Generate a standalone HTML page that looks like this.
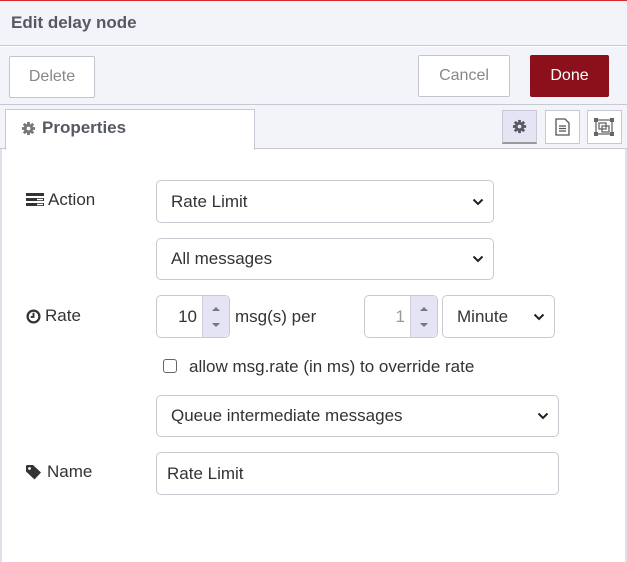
<!DOCTYPE html>
<html><head><style>
*{box-sizing:border-box;margin:0;padding:0}
body{width:627px;height:562px;overflow:hidden;background:#fff;font-family:"Liberation Sans",Arial,sans-serif;position:relative;color:#333}
.a{position:absolute}
.btn{position:absolute;border:1px solid #c4c4cc;background:#fff;color:#888;font-size:16px;display:flex;align-items:center;justify-content:center;border-radius:2px}
.inp{position:absolute;border:1px solid #c8c8d0;border-radius:5px;background:#fff;font-size:17px;color:#333;display:flex;align-items:center;padding-left:14px}
.chev{position:absolute;right:9px;top:50%;margin-top:-4px}
.lbl{position:absolute;font-size:17px;color:#333;display:flex;align-items:center;gap:4px}
.spin{position:absolute;right:0;top:0;bottom:0;width:27px;background:#e4e4f4;border-left:1px solid #d0d0e0;border-radius:0 5px 5px 0}
</style></head><body>
<div class="a" style="left:0;top:0;width:627px;height:1px;background:#d42a2a"></div>
<div class="a" style="left:0;top:1px;width:627px;height:45px;background:#f3f3fa;border-bottom:1px solid #c8c8d4"></div>
<div class="a" style="left:11px;top:13px;font-size:17px;font-weight:bold;color:#555a62">Edit delay node</div>
<div class="a" style="left:0;top:47px;width:627px;height:58px;background:#f3f3fa;border-bottom:1px solid #c8c8d4"></div>
<div class="btn" style="left:9px;top:56px;width:86px;height:42px">Delete</div>
<div class="btn" style="left:418px;top:55px;width:92px;height:42px">Cancel</div>
<div class="btn" style="left:530px;top:55px;width:79px;height:42px;background:#8c101c;border-color:#8c101c;color:#fff">Done</div>
<div class="a" style="left:0;top:105px;width:627px;height:44px;background:#f3f3fa;border-bottom:1px solid #c8c8d4"></div>
<div class="a" style="left:5px;top:109px;width:250px;height:41px;background:#fff;border:1px solid #c8c8d4;border-bottom:none"></div>
<div class="a" style="left:21px;top:118px;font-size:17px;font-weight:bold;color:#555a62;display:flex;align-items:center;gap:6px"><svg width="15" height="15" viewBox="0 0 16 16"><circle cx="8" cy="8" r="5" fill="#777"/><g stroke="#777" stroke-width="3"><line x1="8" y1="1" x2="8" y2="15"/><line x1="1" y1="8" x2="15" y2="8"/><line x1="3" y1="3" x2="13" y2="13"/><line x1="13" y1="3" x2="3" y2="13"/></g><circle cx="8" cy="8" r="2" fill="#fff"/></svg>Properties</div>
<div class="a" style="left:502px;top:110px;width:35px;height:34px;background:#e4e4f4;border:1px solid #c8c8d4;border-bottom:2px solid #999"></div>
<svg class="a" style="left:512px;top:119px" width="15" height="15" viewBox="0 0 16 16"><circle cx="8" cy="8" r="5" fill="#555a62"/><g stroke="#555a62" stroke-width="3"><line x1="8" y1="1" x2="8" y2="15"/><line x1="1" y1="8" x2="15" y2="8"/><line x1="3" y1="3" x2="13" y2="13"/><line x1="13" y1="3" x2="3" y2="13"/></g><circle cx="8" cy="8" r="2" fill="#e4e4f4"/></svg>
<div class="a" style="left:545px;top:110px;width:35px;height:34px;background:#fff;border:1px solid #c8c8d4"></div>
<svg class="a" style="left:555px;top:118px" width="15" height="18" viewBox="0 0 15 18"><path d="M1 1h9l4 4v12H1z" fill="#fff" stroke="#555" stroke-width="1.3"/><path d="M4 8h7M4 10.5h7M4 13h7" stroke="#555" stroke-width="1.2"/></svg>
<div class="a" style="left:587px;top:110px;width:35px;height:34px;background:#fff;border:1px solid #c8c8d4"></div>
<svg class="a" style="left:594px;top:118px" width="20" height="18" viewBox="0 0 20 18"><rect x="2" y="2" width="16" height="14" fill="none" stroke="#666" stroke-width="1.3"/><rect x="5" y="5" width="7" height="6" fill="none" stroke="#666" stroke-width="1.3"/><rect x="8" y="8" width="7" height="6" fill="none" stroke="#666" stroke-width="1.3"/><g fill="#666"><rect x="0" y="0" width="4" height="4"/><rect x="16" y="0" width="4" height="4"/><rect x="0" y="14" width="4" height="4"/><rect x="16" y="14" width="4" height="4"/></g></svg>
<div class="a" style="left:0;top:149px;width:2px;height:413px;background:#e0e0e8"></div>
<div class="a" style="left:625px;top:149px;width:2px;height:413px;background:#e0e0e8"></div>

<div class="lbl" style="left:26px;top:190px"><svg width="18" height="14" viewBox="0 0 18 14"><rect x="0" y="0" width="18" height="3" fill="#333"/><rect x="0" y="5" width="18" height="3" fill="#333"/><rect x="0" y="10" width="18" height="3" fill="#333"/><rect x="11" y="5.8" width="6" height="1.4" fill="#fff"/><rect x="11" y="10.8" width="6" height="1.4" fill="#fff"/></svg>Action</div>
<div class="inp" style="left:156px;top:180px;width:338px;height:43px">Rate Limit<svg class="chev" width="12" height="8" viewBox="0 0 12 8"><path d="M1.5 1.5l4.5 4.5 4.5-4.5" fill="none" stroke="#222" stroke-width="2"/></svg></div>
<div class="inp" style="left:156px;top:238px;width:338px;height:42px">All messages<svg class="chev" width="12" height="8" viewBox="0 0 12 8"><path d="M1.5 1.5l4.5 4.5 4.5-4.5" fill="none" stroke="#222" stroke-width="2"/></svg></div>

<div class="lbl" style="left:26px;top:306px"><svg width="15" height="15" viewBox="0 0 16 16"><circle cx="8" cy="8" r="6.3" fill="none" stroke="#333" stroke-width="2.4"/><path d="M8 4v4.5H5" fill="none" stroke="#333" stroke-width="2"/></svg>Rate</div>
<div class="inp" style="left:156px;top:295px;width:74px;height:43px;padding:0"><span style="position:absolute;right:32px">10</span><div class="spin"><svg style="position:absolute;left:8px;top:9px" width="10" height="25" viewBox="0 0 10 25"><path d="M1 6l4-4 4 4z M1 18l4 4 4-4z" fill="#777"/></svg></div></div>
<div class="a" style="left:235px;top:307px;font-size:17px">msg(s) per</div>
<div class="inp" style="left:364px;top:295px;width:74px;height:43px;padding:0;color:#999"><span style="position:absolute;right:32px">1</span><div class="spin"><svg style="position:absolute;left:8px;top:9px" width="10" height="25" viewBox="0 0 10 25"><path d="M1 6l4-4 4 4z M1 18l4 4 4-4z" fill="#777"/></svg></div></div>
<div class="inp" style="left:442px;top:295px;width:113px;height:43px">Minute<svg class="chev" width="12" height="8" viewBox="0 0 12 8"><path d="M1.5 1.5l4.5 4.5 4.5-4.5" fill="none" stroke="#222" stroke-width="2"/></svg></div>

<div class="a" style="left:163px;top:359px;width:14px;height:14px;border:1.5px solid #666;border-radius:3px"></div>
<div class="a" style="left:189px;top:357px;font-size:17px">allow msg.rate (in ms) to override rate</div>
<div class="inp" style="left:156px;top:395px;width:403px;height:42px">Queue intermediate messages<svg class="chev" width="12" height="8" viewBox="0 0 12 8"><path d="M1.5 1.5l4.5 4.5 4.5-4.5" fill="none" stroke="#222" stroke-width="2"/></svg></div>

<div class="lbl" style="left:26px;top:462px"><svg width="17" height="15" viewBox="0 0 17 15"><path d="M0 1.5Q0 0 1.5 0H7l8 7.5-6.5 7L0 6.5z" fill="#333"/><circle cx="3.5" cy="3.5" r="1.4" fill="#fff"/></svg>Name</div>
<div class="inp" style="left:156px;top:452px;width:403px;height:43px;padding-left:10px">Rate Limit</div>
</body></html>
